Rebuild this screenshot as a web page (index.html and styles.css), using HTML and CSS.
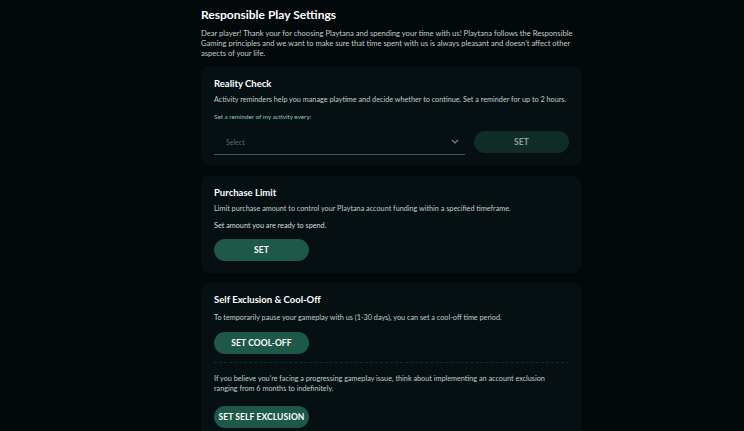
FILE: index.html
```html
<!DOCTYPE html>
<html>
<head>
<meta charset="utf-8">
<link rel="stylesheet" href="styles.css">
</head>
<body>
<main class="page">
  <h1 class="page-title">Responsible Play Settings</h1>
  <p class="intro">Dear player! Thank your for choosing Playtana and spending your time with us! Playtana follows the Responsible Gaming principles and we want to make sure that time spent with us is always pleasant and doesn't affect other aspects of your life.</p>

  <section class="card card-first">
    <h2 class="card-title">Reality Check</h2>
    <p class="desc">Activity reminders help you manage playtime and decide whether to continue. Set a reminder for up to 2 hours.</p>
    <p class="label">Set a reminder of my activity every:</p>
    <div class="select-row">
      <div class="select">
        <span class="select-text">Select</span>
        <svg class="chev" width="8" height="5" viewBox="0 0 8 5"><path d="M1 1l3 3 3-3" fill="none" stroke="#6f8a83" stroke-width="1.2"/></svg>
      </div>
      <button class="btn btn-disabled">SET</button>
    </div>
  </section>

  <section class="card">
    <h2 class="card-title">Purchase Limit</h2>
    <p class="desc">Limit purchase amount to control your Playtana account funding within a specified timeframe.</p>
    <p class="desc desc-light">Set amount you are ready to spend.</p>
    <button class="btn btn-tight">SET</button>
  </section>

  <section class="card">
    <h2 class="card-title">Self Exclusion &amp; Cool-Off</h2>
    <p class="desc desc-gap">To temporarily pause your gameplay with us (1-30 days), you can set a cool-off time period.</p>
    <button class="btn">SET COOL-OFF</button>
    <hr class="divider">
    <p class="desc desc-wrap">If you believe you're facing a progressing gameplay issue, think about implementing an account exclusion ranging from 6 months to indefinitely.</p>
    <button class="btn btn-last">SET SELF EXCLUSION</button>
  </section>
</main>
</body>
</html>
```

FILE: styles.css
```css
* { box-sizing: border-box; }
html, body {
  margin: 0;
  padding: 0;
  background: #03080a;
  font-family: "Lato", "Noto Sans", sans-serif;
  color: #c9d2cf;
}
.page {
  width: 380px;
  margin-left: 201px;
  padding-top: 7px;
  display: flex;
  flex-direction: column;
}
.page-title {
  margin: 0;
  font-size: 12px;
  font-weight: 700;
  color: #ffffff;
  line-height: 16px;
}
.intro {
  margin: 5px 0 0;
  font-size: 7.6px;
  line-height: 10px;
  color: #c3cbc8;
}
.card {
  margin-top: 10px;
  background: #061013;
  border-radius: 8px;
  padding: 11px 12px 12px 13px;
  display: flex;
  flex-direction: column;
  align-items: flex-start;
}
.card-first { margin-top: 8px; padding-top: 12px; padding-bottom: 11px; }
.card-title {
  margin: 0;
  font-size: 9.5px;
  font-weight: 700;
  color: #ffffff;
  line-height: 12px;
}
.desc {
  margin: 5px 0 0;
  font-size: 7.25px;
  line-height: 10px;
  color: #c3cbc8;
}
.desc-gap { margin-top: 7px; }
.desc-light { color: #d8dfdc; margin-top: 7px; }
.desc-wrap { margin-top: 11px; }
.label {
  margin: 8px 0 0;
  font-size: 6.3px;
  line-height: 8px;
  color: #8fc6b3;
}
.select-row {
  margin-top: 8px;
  width: 100%;
  display: flex;
  align-items: center;
  gap: 9px;
}
.select {
  flex: 0 0 251px;
  height: 26px;
  border-bottom: 1px solid #3f5a53;
  display: flex;
  align-items: center;
  justify-content: space-between;
  padding: 0 6px 0 12px;
}
.select-text {
  font-size: 7px;
  color: #536d66;
}
.btn {
  margin-top: 9px;
  width: 95px;
  height: 22px;
  border: none;
  border-radius: 11px;
  background: #1e5849;
  color: #ffffff;
  font-family: "Lato", "Noto Sans", sans-serif;
  font-weight: 700;
  font-size: 8.5px;
  letter-spacing: 0.1px;
  padding: 0;
}
.btn-tight { margin-top: 8px; }
.btn-last { margin-top: 12px; }
.btn-disabled {
  margin-top: 0;
  background: #0f2c26;
  color: #8ea39d;
}
.divider {
  width: 100%;
  margin: 8px 0 0;
  border: none;
  border-top: 1px dashed #1b2a27;
}
```
